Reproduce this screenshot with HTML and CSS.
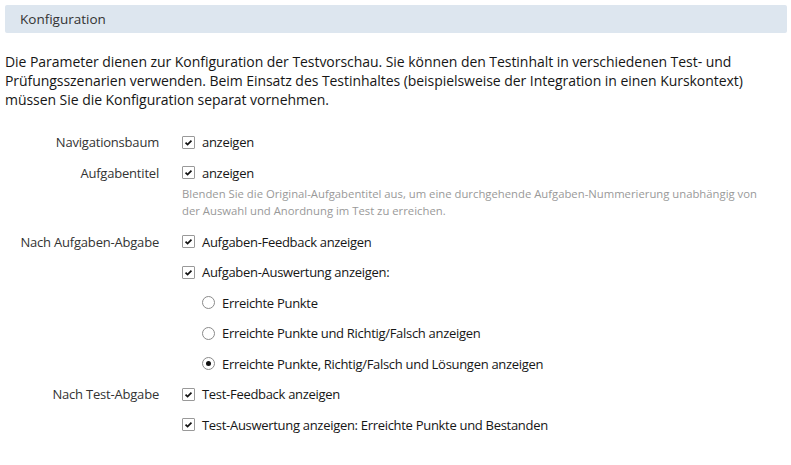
FILE: index.html
```html
<!DOCTYPE html>
<html lang="de">
<head>
<meta charset="utf-8">
<title>Konfiguration</title>
<link rel="stylesheet" href="styles.css">
</head>
<body>
<div class="panel">
  <h2 class="panel-head">Konfiguration</h2>
  <p class="intro">Die Parameter dienen zur Konfiguration der Testvorschau. Sie können den Testinhalt in verschiedenen Test- und Prüfungsszenarien verwenden. Beim Einsatz des Testinhaltes (beispielsweise der Integration in einen Kurskontext) müssen Sie die Konfiguration separat vornehmen.</p>

  <div class="form">
    <div class="row">
      <div class="label">Navigationsbaum</div>
      <div class="field">
        <div class="opt"><span class="cb"><svg viewBox="0 0 13 13"><path d="M3 6.6 L5.4 9 L10 4.2"/></svg></span><span>anzeigen</span></div>
      </div>
    </div>

    <div class="row">
      <div class="label">Aufgabentitel</div>
      <div class="field">
        <div class="opt"><span class="cb"><svg viewBox="0 0 13 13"><path d="M3 6.6 L5.4 9 L10 4.2"/></svg></span><span>anzeigen</span></div>
        <div class="help">Blenden Sie die Original-Aufgabentitel aus, um eine durchgehende Aufgaben-Nummerierung unabhängig von der Auswahl und Anordnung im Test zu erreichen.</div>
      </div>
    </div>

    <div class="row">
      <div class="label">Nach Aufgaben-Abgabe</div>
      <div class="field">
        <div class="opt"><span class="cb"><svg viewBox="0 0 13 13"><path d="M3 6.6 L5.4 9 L10 4.2"/></svg></span><span>Aufgaben-Feedback anzeigen</span></div>
        <div class="opt"><span class="cb"><svg viewBox="0 0 13 13"><path d="M3 6.6 L5.4 9 L10 4.2"/></svg></span><span>Aufgaben-Auswertung anzeigen:</span></div>
        <div class="sub">
          <div class="opt"><span class="rb"></span><span>Erreichte Punkte</span></div>
          <div class="opt"><span class="rb"></span><span>Erreichte Punkte und Richtig/Falsch anzeigen</span></div>
          <div class="opt"><span class="rb on"></span><span>Erreichte Punkte, Richtig/Falsch und Lösungen anzeigen</span></div>
        </div>
      </div>
    </div>

    <div class="row">
      <div class="label">Nach Test-Abgabe</div>
      <div class="field">
        <div class="opt"><span class="cb"><svg viewBox="0 0 13 13"><path d="M3 6.6 L5.4 9 L10 4.2"/></svg></span><span>Test-Feedback anzeigen</span></div>
        <div class="opt"><span class="cb"><svg viewBox="0 0 13 13"><path d="M3 6.6 L5.4 9 L10 4.2"/></svg></span><span>Test-Auswertung anzeigen: Erreichte Punkte und Bestanden</span></div>
      </div>
    </div>
  </div>
</div>
</body>
</html>
```

FILE: styles.css
```css
html, body {
  margin: 0;
  padding: 0;
  background: #fff;
}

body {
  font-family: "Open Sans", "Liberation Sans", sans-serif;
  color: #161616;
  font-size: 14px;
}

.panel {
  padding: 5px 4px 0 5px;
}

.panel-head {
  margin: 0;
  height: 28px;
  line-height: 28px;
  padding: 0 15px;
  background: #dde6ef;
  border-radius: 2px;
  font-size: 13.5px;
  font-weight: normal;
  color: #333;
}

.intro {
  margin: 19px 0 0 0;
  font-size: 14px;
  line-height: 19px;
  letter-spacing: -0.05px;
  color: #161616;
}

.form {
  margin-top: 21px;
  display: flex;
  flex-direction: column;
}

.row {
  display: grid;
  grid-template-columns: 154px 1fr;
  column-gap: 23px;
}

.label {
  text-align: right;
  font-size: 13px;
  letter-spacing: -0.2px;
  line-height: 24px;
  color: #333;
}

.field {
  display: flex;
  flex-direction: column;
}

.opt {
  display: flex;
  align-items: center;
  gap: 7px;
  height: 24.5px;
  margin-bottom: 6px;
  font-size: 13px;
  letter-spacing: -0.3px;
  color: #161616;
}

.cb {
  width: 11px;
  height: 11px;
  border: 1px solid #999;
  border-radius: 1px;
  background: #fff;
  display: inline-flex;
  flex: none;
}

.cb svg {
  width: 11px;
  height: 11px;
  fill: none;
  stroke: #111;
  stroke-width: 2;
}

.sub {
  padding-left: 20px;
}

.rb {
  width: 11px;
  height: 11px;
  border: 1px solid #8a8a8a;
  border-radius: 50%;
  background: #fff;
  flex: none;
  position: relative;
}

.rb.on::after {
  content: "";
  position: absolute;
  left: 3px;
  top: 3px;
  width: 5px;
  height: 5px;
  border-radius: 50%;
  background: #111;
}

.help {
  font-size: 11.3px;
  line-height: 17px;
  color: #999;
  margin: -5.75px 0 10.25px 0;
  max-width: 585px;
}
```
